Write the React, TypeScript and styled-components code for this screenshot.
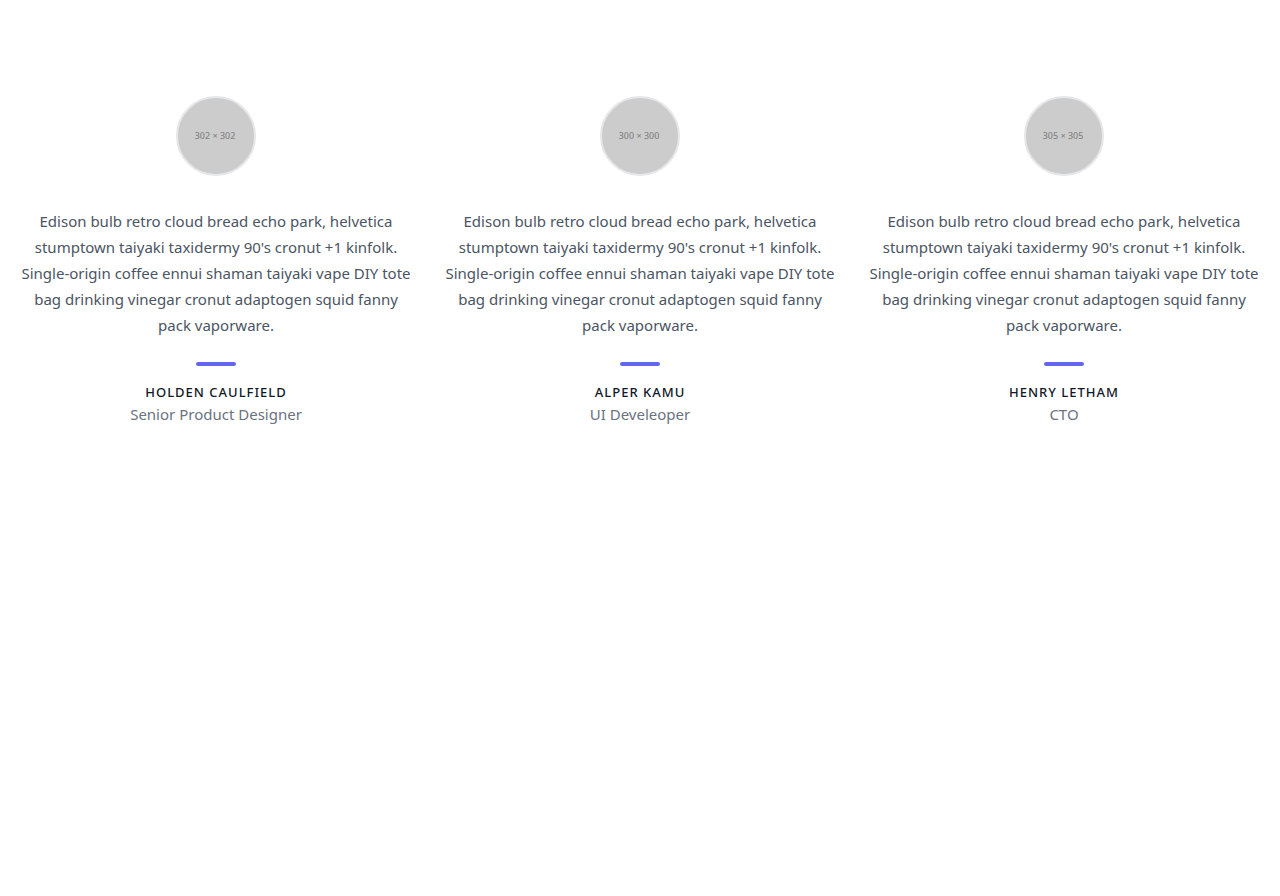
import React from "react";
import styled, { createGlobalStyle } from "styled-components";

const GlobalStyle = createGlobalStyle`
  *, *::before, *::after { box-sizing: border-box; }
  body {
    margin: 0;
    background: #fff;
    color: #4b5563;
    font-family: "Noto Sans", "Open Sans", sans-serif;
    font-size: 15px;
    line-height: 24px;
  }
  h2, p { margin: 0; }
`;

const Section = styled.section`
  padding: 96px 16px;
`;

const Grid = styled.div`
  display: grid;
  grid-template-columns: repeat(3, minmax(0, 1fr));
  gap: 24px;
  @media (max-width: 1023px) {
    grid-template-columns: minmax(0, 1fr);
  }
`;

const Card = styled.article`
  display: flex;
  flex-direction: column;
  align-items: center;
  text-align: center;
`;

const Avatar = styled.div`
  display: flex;
  align-items: center;
  justify-content: center;
  width: 80px;
  height: 80px;
  margin-bottom: 32px;
  padding-right: 2px;
  border: 2px solid #e5e7eb;
  border-radius: 50%;
  background: #ccc;
  color: #858585;
  font-size: 9px;
  font-weight: 500;
  line-height: 12px;
  white-space: nowrap;
`;

const Quote = styled.p`
  line-height: 26px;
`;

const Accent = styled.span`
  width: 40px;
  height: 4px;
  margin: 24px 0 16px;
  border-radius: 4px;
  background: #6366f1;
`;

const Name = styled.h2`
  color: #111827;
  font-size: 13px;
  font-weight: 500;
  line-height: 20px;
  letter-spacing: 1px;
  text-transform: uppercase;
`;

const Role = styled.p`
  color: #6b7280;
`;

const quote =
  "Edison bulb retro cloud bread echo park, helvetica stumptown taiyaki taxidermy 90's cronut +1 kinfolk. Single-origin coffee ennui shaman taiyaki vape DIY tote bag drinking vinegar cronut adaptogen squid fanny pack vaporware.";

const testimonials = [
  { size: 302, name: "Holden Caulfield", role: "Senior Product Designer" },
  { size: 300, name: "Alper Kamu", role: "UI Develeoper" },
  { size: 305, name: "Henry Letham", role: "CTO" },
];

export default function App() {
  return (
    <>
      <GlobalStyle />
      <Section>
        <Grid>
          {testimonials.map(({ size, name, role }) => (
            <Card key={name}>
              <Avatar>{`${size} × ${size}`}</Avatar>
              <Quote>{quote}</Quote>
              <Accent />
              <Name>{name}</Name>
              <Role>{role}</Role>
            </Card>
          ))}
        </Grid>
      </Section>
    </>
  );
}
